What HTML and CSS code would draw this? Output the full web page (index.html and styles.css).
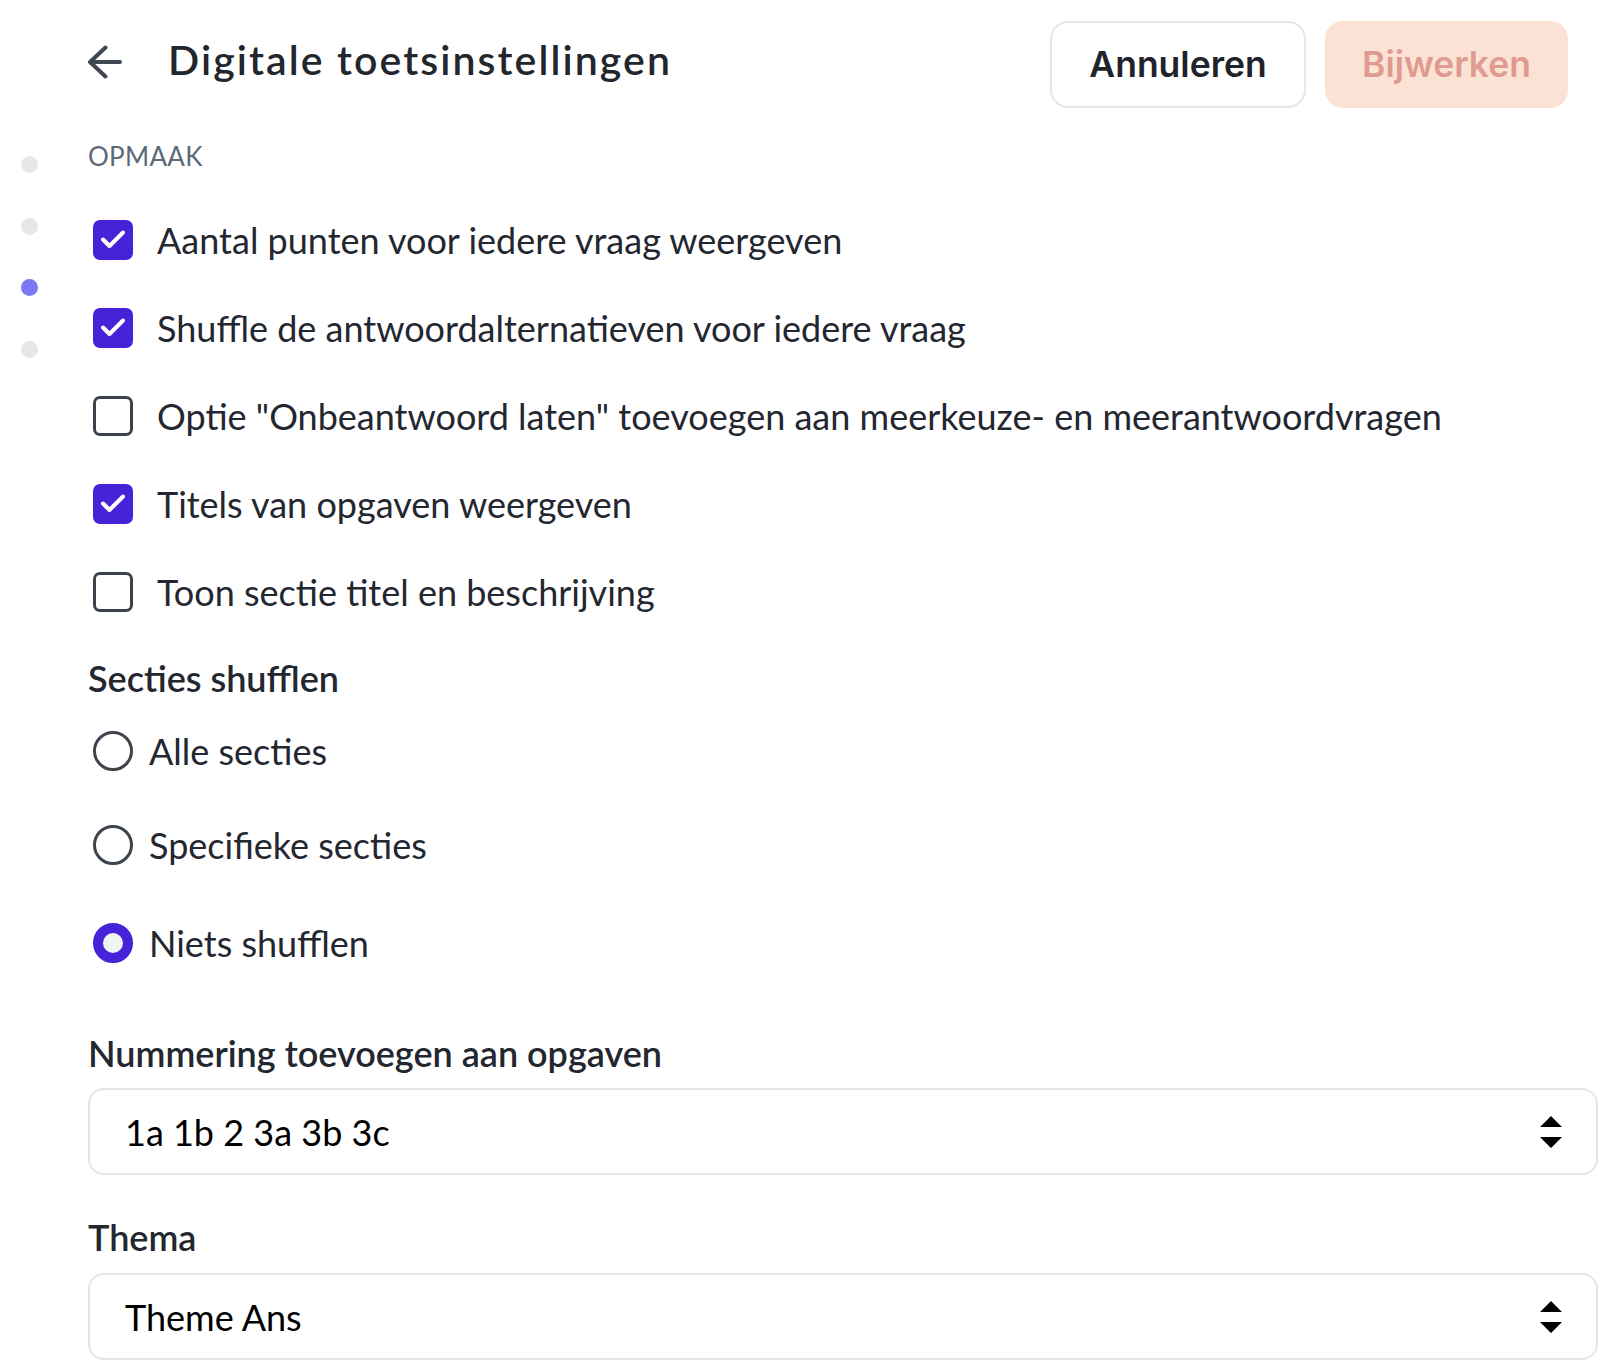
FILE: index.html
```html
<!DOCTYPE html>
<html lang="nl">
<head>
<meta charset="utf-8">
<title>Digitale toetsinstellingen</title>
<link rel="stylesheet" href="styles.css">
</head>
<body>
<div class="page">
  <nav class="rail">
    <span class="dot"></span>
    <span class="dot"></span>
    <span class="dot active"></span>
    <span class="dot"></span>
  </nav>
  <main class="content">
    <header class="header">
      <svg class="back" viewBox="0 0 35 34" aria-hidden="true">
        <path d="M33 17H3M18.5 2.5L3 17l15.5 14.5" fill="none" stroke="#3f4752" stroke-width="4" stroke-linecap="round" stroke-linejoin="round"/>
      </svg>
      <h1 class="title">Digitale toetsinstellingen</h1>
      <button class="btn btn-secondary">Annuleren</button>
      <button class="btn btn-primary">Bijwerken</button>
    </header>

    <div class="section-label">OPMAAK</div>

    <div class="checklist">
      <div class="option check-row">
        <span class="box checked"><svg viewBox="0 0 40 40"><path d="M10 19.5L16.5 26L30 12.5" fill="none" stroke="#fff" stroke-width="4" stroke-linecap="round" stroke-linejoin="round"/></svg></span>
        <span class="option-text">Aantal punten voor iedere vraag weergeven</span>
      </div>
      <div class="option check-row">
        <span class="box checked"><svg viewBox="0 0 40 40"><path d="M10 19.5L16.5 26L30 12.5" fill="none" stroke="#fff" stroke-width="4" stroke-linecap="round" stroke-linejoin="round"/></svg></span>
        <span class="option-text">Shuffle de antwoordalternatieven voor iedere vraag</span>
      </div>
      <div class="option check-row">
        <span class="box"></span>
        <span class="option-text">Optie "Onbeantwoord laten" toevoegen aan meerkeuze- en meerantwoordvragen</span>
      </div>
      <div class="option check-row">
        <span class="box checked"><svg viewBox="0 0 40 40"><path d="M10 19.5L16.5 26L30 12.5" fill="none" stroke="#fff" stroke-width="4" stroke-linecap="round" stroke-linejoin="round"/></svg></span>
        <span class="option-text">Titels van opgaven weergeven</span>
      </div>
      <div class="option check-row">
        <span class="box"></span>
        <span class="option-text">Toon sectie titel en beschrijving</span>
      </div>
    </div>

    <div class="heading">Secties shufflen</div>

    <div class="radiolist">
      <div class="option radio-row">
        <span class="radio"></span>
        <span class="option-text">Alle secties</span>
      </div>
      <div class="option radio-row">
        <span class="radio"></span>
        <span class="option-text">Specifieke secties</span>
      </div>
      <div class="option radio-row radio-row-last">
        <span class="radio checked"></span>
        <span class="option-text">Niets shufflen</span>
      </div>
    </div>

    <div class="field-label">Nummering toevoegen aan opgaven</div>
    <div class="select">
      <span class="select-value">1a 1b 2 3a 3b 3c</span>
      <svg class="select-arrows" viewBox="0 0 22 32" aria-hidden="true"><path d="M0 11L11 0L22 11Z M0 21H22L11 32Z" fill="#000"/></svg>
    </div>

    <div class="field-label field-label-2">Thema</div>
    <div class="select select-2">
      <span class="select-value">Theme Ans</span>
      <svg class="select-arrows" viewBox="0 0 22 32" aria-hidden="true"><path d="M0 11L11 0L22 11Z M0 21H22L11 32Z" fill="#000"/></svg>
    </div>
  </main>
</div>
</body>
</html>
```

FILE: styles.css
```css
* { box-sizing: border-box; }
html, body { margin: 0; padding: 0; background: #fff; }
body {
  font-family: Lato, "Noto Sans", sans-serif;
  color: #23272f;
}
.page {
  display: flex;
  min-height: 1368px;
}
.rail {
  width: 88px;
  flex: none;
  padding: 156px 0 0 21px;
  display: flex;
  flex-direction: column;
  gap: 44.5px;
}
.dot {
  display: block;
  width: 17px;
  height: 17px;
  border-radius: 50%;
  background: #e7e7e7;
}
.dot.active { background: #7a78f2; }

.content {
  flex: 1;
  padding-right: 20px;
}
.header {
  display: flex;
  align-items: center;
  height: 88px;
  margin-top: 20px;
  padding-right: 30px;
}
.back {
  width: 35px;
  height: 34px;
  flex: none;
  margin-left: -1px;
  margin-right: 46px;
  margin-bottom: 4px;
}
.title {
  flex: 1;
  margin: 0;
  padding-bottom: 8px;
  font-size: 41px;
  line-height: 48px;
  font-weight: 600;
  letter-spacing: 2.1px;
  color: #22262d;
}
.btn {
  height: 87px;
  border-radius: 18px;
  border: 2px solid;
  font-family: Inter, "Liberation Sans", sans-serif;
  font-weight: 600;
  font-size: 35.5px;
  display: flex;
  align-items: center;
  justify-content: center;
  padding: 0;
}
.btn-secondary {
  width: 256px;
  background: #fff;
  border-color: #e6e7e9;
  color: #1f232a;
}
.btn-primary {
  width: 243px;
  margin-left: 19px;
  background: #fbe2d5;
  border-color: #fbe2d5;
  color: #df9b90;
}

.section-label {
  margin-top: 30px;
  font-size: 26px;
  line-height: 36px;
  letter-spacing: 0.3px;
  color: #5c6a77;
}

.checklist, .radiolist {
  display: flex;
  flex-direction: column;
  padding-left: 5px;
}
.checklist { margin-top: 42px; gap: 40px; }
.radiolist { margin-top: 24.5px; gap: 46px; }
.radio-row-last { margin-top: 4px; }

.option {
  display: flex;
  align-items: center;
  height: 48px;
  font-size: 36px;
  line-height: 48px;
  white-space: nowrap;
}
.check-row { gap: 24px; }
.radio-row { gap: 16px; }

.box {
  width: 40px;
  height: 40px;
  flex: none;
  border-radius: 7px;
  border: 3.5px solid #3c434d;
}
.box.checked {
  border: 0;
  background: #4623d9;
}
.box svg { display: block; width: 40px; height: 40px; }

.radio {
  width: 40px;
  height: 40px;
  flex: none;
  border-radius: 50%;
  border: 3.5px solid #3d444e;
}
.radio.checked {
  border: 10px solid #4623d9;
  background: #f1f2f4;
}

.heading {
  margin-top: 38px;
  font-size: 36px;
  line-height: 48px;
  font-weight: 600;
}
.field-label {
  margin-top: 62.5px;
  font-size: 36px;
  line-height: 48px;
  font-weight: 600;
}
.field-label-2 { margin-top: 38px; }

.select {
  margin-top: 11px;
  height: 87px;
  border: 2px solid #e6e6e6;
  border-radius: 16px;
  display: flex;
  align-items: center;
  justify-content: space-between;
  padding: 0 34px 0 35px;
  font-size: 36px;
  color: #000;
}
.select-2 { margin-top: 12px; }
.select-arrows {
  width: 22px;
  height: 32px;
  flex: none;
}
```
